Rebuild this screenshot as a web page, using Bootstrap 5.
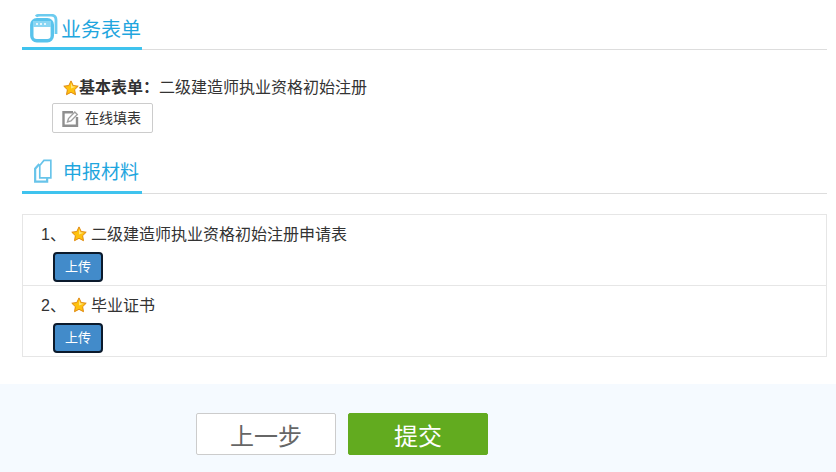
<!DOCTYPE html>
<html lang="zh-CN">
<head>
<meta charset="utf-8">
<title>申报材料</title>
<link href="https://cdn.jsdelivr.net/npm/bootstrap@5.3.0/dist/css/bootstrap.min.css" rel="stylesheet">
<style>
html,body{height:472px;overflow:hidden}
body{font-family:"Liberation Sans","Noto Sans CJK SC",sans-serif;color:#333;font-size:16px;background:#fff}
.pg-main{padding:0 9px 0 22px}
.sec-head{height:50px;border-bottom:1px solid #ddd}
.sec-tab{width:120px;height:50px;border-bottom:3px solid #3fc3ee;color:#1fa6de;line-height:26px}
.sec-tab svg{flex:none}
.tab-one{padding:14px 0 0 8px;gap:1px;font-size:20px}
.tab-one span{margin-top:3px}
.tab-two{padding:15px 0 0 11px;gap:10px;font-size:19px}
.tab-two span{margin-top:1px}
.sec-two{margin-top:11px}
.form-line{height:24px;margin-top:26px;padding-left:41px;line-height:24px}
.form-line b{font-weight:700}
.fill-btn{width:101px;height:30px;margin:3px 0 0 30px;padding:0 0 0 9px;gap:6px;border:1px solid #ccc;border-radius:2px;font-size:14px;color:#333;background:#fff}
.mat-list{margin-top:20px;border:1px solid #e6e6e6;border-radius:0}
.mat-row{height:71px;padding:7px 0 0 18px;border-bottom:1px solid #e6e6e6}
.mat-row:last-child{height:70px;border-bottom:0}
.mat-name{height:24px;line-height:24px}
.mat-name span{margin-top:2px}
.mat-num{width:30px}
.mat-star{margin-right:4px}
.up-btn{display:block;width:50px;height:30px;margin:6px 0 0 12px;padding:0;border:2px solid #0b1a2c;border-radius:4px;background:#428bca;color:#fff;font-size:13px;line-height:26px}
.up-btn:hover{background:#428bca;color:#fff;border-color:#0b1a2c}
.pg-foot{height:88px;margin-top:27px;padding:29px 0 0 196px;background:#f5faff;gap:12px}
.foot-btn{width:140px;height:42px;padding:5px 0 0;border-radius:2px;font-size:24px;line-height:34px}
.foot-prev{border:1px solid #ccc;background:#fff;color:#666}
.foot-next{border:1px solid #62ab1f;background:#62ab1f;color:#fff}
.foot-prev:hover{background:#fff;color:#666;border-color:#ccc}
.foot-next:hover{background:#62ab1f;color:#fff;border-color:#62ab1f}
</style>
</head>
<body>
<svg width="0" height="0" class="d-block">
<defs>
<symbol id="star" viewBox="0 0 16 16">
<path d="M8 .9l2.200 4.600 5 .7-3.600 3.500.9 5L8 12.300l-4.500 2.400.9-5L.8 6.200l5-.7z" fill="#ffc20e" stroke="#e08a10" stroke-width="1" stroke-linejoin="round"/>
<path d="M8 3l1.400 3.300 3.400.4L8 8.500z" fill="#ffe680"/>
</symbol>
</defs>
</svg>
<div class="pg-main">
<div class="sec-head">
<div class="sec-tab tab-one d-flex align-items-start">
<svg width="30" height="30" viewBox="0 0 30 30" fill="none">
<path d="M6 2.500Q7 1.200 10 1.200H21Q26 1.200 26 6V20" stroke="#6ccbef" stroke-width="2.800"/>
<rect x="1.800" y="5.800" width="20.500" height="21" rx="5" stroke="#59c3ec" stroke-width="3.400" fill="#fff"/>
<rect x="3" y="7" width="18" height="6" fill="#8ad6f3"/>
<path d="M6 10h2M10 10h2M14 10h2" stroke="#fff" stroke-width="1.300"/>
</svg>
<span>业务表单</span>
</div>
</div>
<div class="form-line d-flex align-items-center">
<svg width="16" height="16"><use href="#star"/></svg>
<b>基本表单：</b><span>二级建造师执业资格初始注册</span>
</div>
<button type="button" class="btn fill-btn d-flex align-items-center">
<svg width="17" height="17" viewBox="0 0 17 17" fill="none">
<path d="M11 2.200H1.500v13.500h13.500V7" stroke="#8f8f8f" stroke-width="2.400"/>
<path d="M5.500 12l1-3.500L12.800 2l2.500 2.500L9 11z" fill="#fff" stroke="#a0a0a0" stroke-width="1.400"/>
</svg>
<span>在线填表</span>
</button>
<div class="sec-head sec-two">
<div class="sec-tab tab-two d-flex align-items-start">
<svg width="20" height="24" viewBox="0 0 20 26" fill="none">
<path d="M6.500 7L11 1.500H18.500V20.500H6.500z" stroke="#68c4ea" stroke-width="1.800" fill="#fff"/>
<path d="M6 5.500L1.500 10.500V24.500H14.500V20.500" stroke="#68c4ea" stroke-width="2.400"/>
</svg>
<span>申报材料</span>
</div>
</div>
<div class="mat-list">
<div class="mat-row">
<div class="mat-name d-flex align-items-center">
<span class="mat-num">1、</span>
<svg class="mat-star" width="16" height="16"><use href="#star"/></svg>
<span>二级建造师执业资格初始注册申请表</span>
</div>
<button type="button" class="btn up-btn">上传</button>
</div>
<div class="mat-row">
<div class="mat-name d-flex align-items-center">
<span class="mat-num">2、</span>
<svg class="mat-star" width="16" height="16"><use href="#star"/></svg>
<span>毕业证书</span>
</div>
<button type="button" class="btn up-btn">上传</button>
</div>
</div>
</div>
<div class="pg-foot d-flex align-items-start">
<button type="button" class="btn foot-btn foot-prev">上一步</button>
<button type="button" class="btn foot-btn foot-next">提交</button>
</div>
<script src="https://cdn.jsdelivr.net/npm/bootstrap@5.3.0/dist/js/bootstrap.bundle.min.js"></script>
</body>
</html>
